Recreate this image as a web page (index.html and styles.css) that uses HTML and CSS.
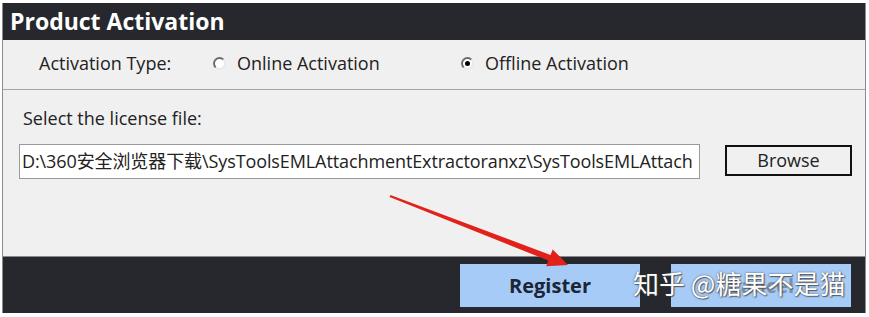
FILE: index.html
```html
<!DOCTYPE html>
<html>
<head>
<meta charset="utf-8">
<link rel="stylesheet" href="styles.css">
</head>
<body>
<div class="window">
  <div class="titlebar">Product Activation</div>
  <div class="typebar">
    <span class="type-label">Activation Type:</span>
    <label class="radio"><span class="radio-dot"></span>Online Activation</label>
    <label class="radio"><span class="radio-dot checked"></span>Offline Activation</label>
  </div>
  <div class="panel">
    <div class="panel-label">Select the license file:</div>
    <div class="file-row">
      <div class="file-field">D:\360安全浏览器下载\SysToolsEMLAttachmentExtractoranxz\SysToolsEMLAttach</div>
      <div class="browse">Browse</div>
    </div>
  </div>
  <div class="footer">
    <div class="btn">Register</div>
    <div class="btn btn-hidden">Cancel</div>
  </div>
</div>
<div class="watermark">知乎 @糖果不是猫</div>
<svg class="arrow" width="869" height="317" viewBox="0 0 869 317">
  <polygon points="390.4,195.1 550.5,255.0 552.7,249.4 568,265 546.2,266.2 548.3,260.6 389.6,196.9" fill="#e3211b"/>
</svg>
</body>
</html>
```
FILE: styles.css
```css
html, body {
  margin: 0;
  padding: 0;
  background: #ffffff;
}
body {
  width: 869px;
  height: 317px;
  position: relative;
  overflow: hidden;
  font-family: "Open Sans", "Noto Sans CJK SC", sans-serif;
  color: #222222;
}
.window {
  margin: 3px 0 0 2px;
  width: 862px;
  border-left: 1px solid #8c8c8c;
  border-right: 1px solid #8c8c8c;
}
.titlebar {
  height: 37px;
  background: #26282d;
  color: #ffffff;
  font-family: "Open Sans", sans-serif;
  font-weight: 700;
  font-size: 23px;
  line-height: 37px;
  padding-left: 7px;
}
.typebar {
  background: #f0f0f0;
  border-bottom: 1px solid #a5a5a5;
  display: flex;
  align-items: center;
  font-size: 18px;
  padding-left: 36px;
  box-sizing: border-box;
  height: 50px;
  padding-bottom: 3px;
}
.type-label {
  width: 174px;
}
.radio {
  display: flex;
  align-items: center;
  gap: 11px;
  width: 248px;
}
.radio-dot {
  width: 9px;
  height: 9px;
  border-radius: 50%;
  border: 2px solid;
  border-color: #6a6a6a #e8e8e8 #e8e8e8 #6a6a6a;
  background: #ffffff;
  display: flex;
  align-items: center;
  justify-content: center;
}
.radio-dot.checked::after {
  content: "";
  width: 5px;
  height: 5px;
  border-radius: 50%;
  background: #000000;
}
.panel {
  background: #f0f0f0;
  border-bottom: 1px solid #8a8a8a;
  padding: 16px 0 0 20px;
  box-sizing: border-box;
  height: 167px;
}
.panel-label {
  font-size: 18px;
  line-height: 24px;
}
.file-row {
  display: flex;
  align-items: flex-start;
  margin-top: 14px;
  margin-left: -4px;
}
.file-field {
  width: 677px;
  height: 33px;
  border: 1px solid #9a9a9a;
  background: #ffffff;
  font-size: 18px;
  line-height: 33px;
  padding-left: 2px;
  white-space: nowrap;
  overflow: hidden;
  letter-spacing: -0.1px;
}
.browse {
  margin-left: 25px;
  margin-top: 1px;
  width: 123px;
  height: 27px;
  border: 2px solid #111111;
  background: #f0f0f0;
  font-size: 18px;
  line-height: 27px;
  text-align: center;
}
.footer {
  height: 56px;
  background: #26282d;
  display: flex;
  align-items: flex-start;
  padding: 7px 0 0 457px;
  box-sizing: border-box;
  gap: 31px;
}
.btn {
  width: 180px;
  height: 43px;
  background: #a7cbf7;
  font-family: "Open Sans", sans-serif;
  font-weight: 700;
  font-size: 20px;
  line-height: 43px;
  text-align: center;
  color: #1b2535;
}
.btn-hidden {
  color: #7d8fa8;
}
.watermark {
  position: absolute;
  left: 633px;
  top: 266px;
  font-family: "Noto Sans CJK SC", sans-serif;
  font-size: 26px;
  line-height: 34px;
  color: #ffffff;
  text-shadow: 0 0 2px rgba(60, 60, 60, 0.9), 1px 1px 1px rgba(60, 60, 60, 0.7);
  white-space: nowrap;
}
.arrow {
  position: absolute;
  left: 0;
  top: 0;
}
```
